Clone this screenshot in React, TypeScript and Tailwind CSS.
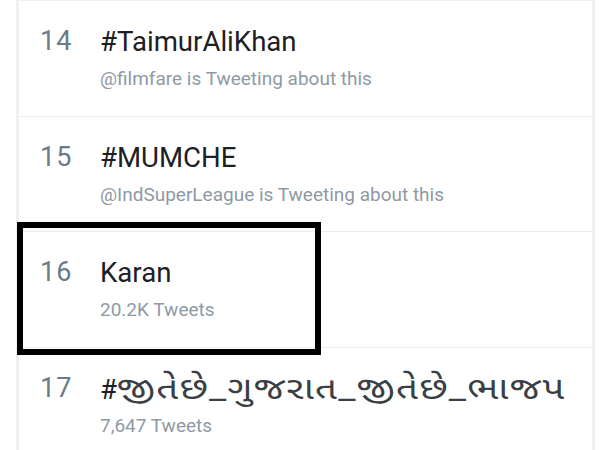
import React from "react";

const rows = [
  { n: "14", title: "#TaimurAliKhan", sub: "@filmfare is Tweeting about this", guj: false },
  { n: "15", title: "#MUMCHE", sub: "@IndSuperLeague is Tweeting about this", guj: false },
  { n: "16", title: "Karan", sub: "20.2K Tweets", guj: false },
  { n: "17", title: "જીતેછે_ગુજરાત_જીતેછે_ભાજપ", sub: "7,647 Tweets", guj: true },
];

export default function App() {
  return (
    <div
      className="relative w-[600px] h-[450px] overflow-hidden bg-white"
      style={{ fontFamily: "Roboto, 'Noto Sans', 'Noto Sans Gujarati', sans-serif" }}
    >
      <div className="ml-[16px] w-[579px] h-full border-l-[3px] border-r-[3px] border-[#f0f0f0] border-t border-t-[#eef1f3]">
        {rows.map((r) => (
          <div
            key={r.n}
            className="h-[115.5px] box-border border-b border-[#e6ecf0] flex pl-[21px] pt-[25px]"
          >
            <div className="w-[60px] text-[27px] leading-[31px] tracking-[1px] text-[#6b7b88]">{r.n}</div>
            <div className="flex flex-col">
              <div className="h-[31px] text-[27.6px] leading-[31px] text-[#1c2024] whitespace-nowrap">
                {r.guj ? (
                  <>
                    #<span className="inline-block origin-left scale-x-[1.2] text-[32px] leading-[31px] tracking-[1px] text-[#3a3f44]">{r.title}</span>
                  </>
                ) : (
                  r.title
                )}
              </div>
              <div className="mt-[10px] text-[19px] leading-[24px] text-[#8d9aa5] whitespace-nowrap">{r.sub}</div>
            </div>
          </div>
        ))}
      </div>
      <div className="absolute left-[17px] top-[222px] w-[304px] h-[133px] border-[6px] border-black" />
    </div>
  );
}
